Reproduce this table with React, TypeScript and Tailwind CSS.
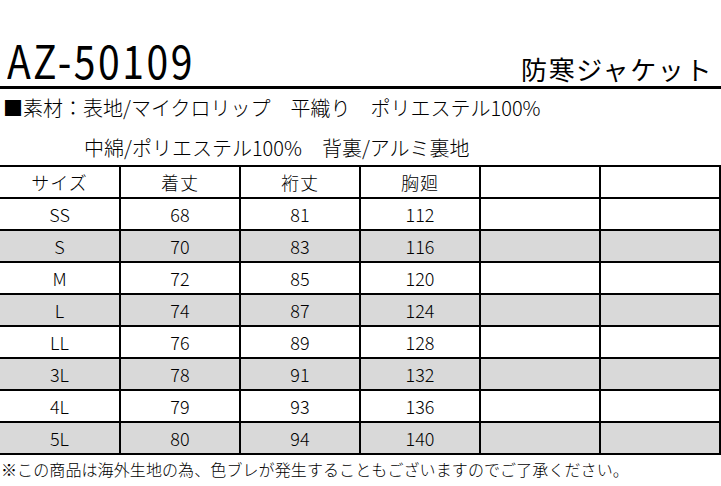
import React from "react";

const rows = [
  ["SS", "68", "81", "112"],
  ["S", "70", "83", "116"],
  ["M", "72", "85", "120"],
  ["L", "74", "87", "124"],
  ["LL", "76", "89", "128"],
  ["3L", "78", "91", "132"],
  ["4L", "79", "93", "136"],
  ["5L", "80", "94", "140"],
];

const headers = ["サイズ", "着丈", "裄丈", "胸廻", "", ""];

function Row({ cells, grey, header }: { cells: string[]; grey?: boolean; header?: boolean }) {
  return (
    <div
      className={`grid grid-cols-[121px_120px_120px_120px_120px_120px] h-[32px] border-b-2 border-black ${
        grey ? "bg-[#d9d9d9]" : "bg-white"
      }`}
    >
      {cells.map((c, i) => (
        <div
          key={i}
          className={`flex items-center justify-center border-r-2 border-black ${
            header ? "text-[18px] tracking-[1px]" : "text-[18px]"
          } leading-none text-black font-light`}
        >
          {c}
        </div>
      ))}
    </div>
  );
}

export default function App() {
  return (
    <div className="w-[721px] h-[486px] overflow-hidden bg-white text-black font-['Noto_Sans_CJK_JP','Noto_Sans',sans-serif]">
      <div className="h-[89px] flex items-end justify-between border-b-[3px] border-black pb-[4px]">
        <div className="pl-[7px] text-[46px] leading-[46px]">
          <span className="inline-block origin-left scale-x-[0.85] tracking-[3px]">AZ-50109</span>
        </div>
        <div className="pr-[8px] text-[26px] leading-[26px] tracking-[1.6px]">防寒ジャケット</div>
      </div>
      <div className="mt-[9px] pl-[3px] text-[20px] leading-[20px] whitespace-pre font-light">
        ■素材：表地/マイクロリップ　平織り　ポリエステル100%
      </div>
      <div className="mt-[20px] pl-[84px] text-[20px] leading-[20px] whitespace-pre font-light">
        中綿/ポリエステル100%　背裏/アルミ裏地
      </div>
      <div className="mt-[7px] border-t-2 border-black">
        <Row cells={headers} header />
        {rows.map((r, i) => (
          <Row key={i} cells={[...r, "", ""]} grey={i % 2 === 1} />
        ))}
      </div>
      <div className="mt-[6px] pl-[1px] text-[16px] leading-[16px] tracking-[0.1px] whitespace-pre font-light">
        ※この商品は海外生地の為、色ブレが発生することもございますのでご了承ください。
      </div>
    </div>
  );
}
